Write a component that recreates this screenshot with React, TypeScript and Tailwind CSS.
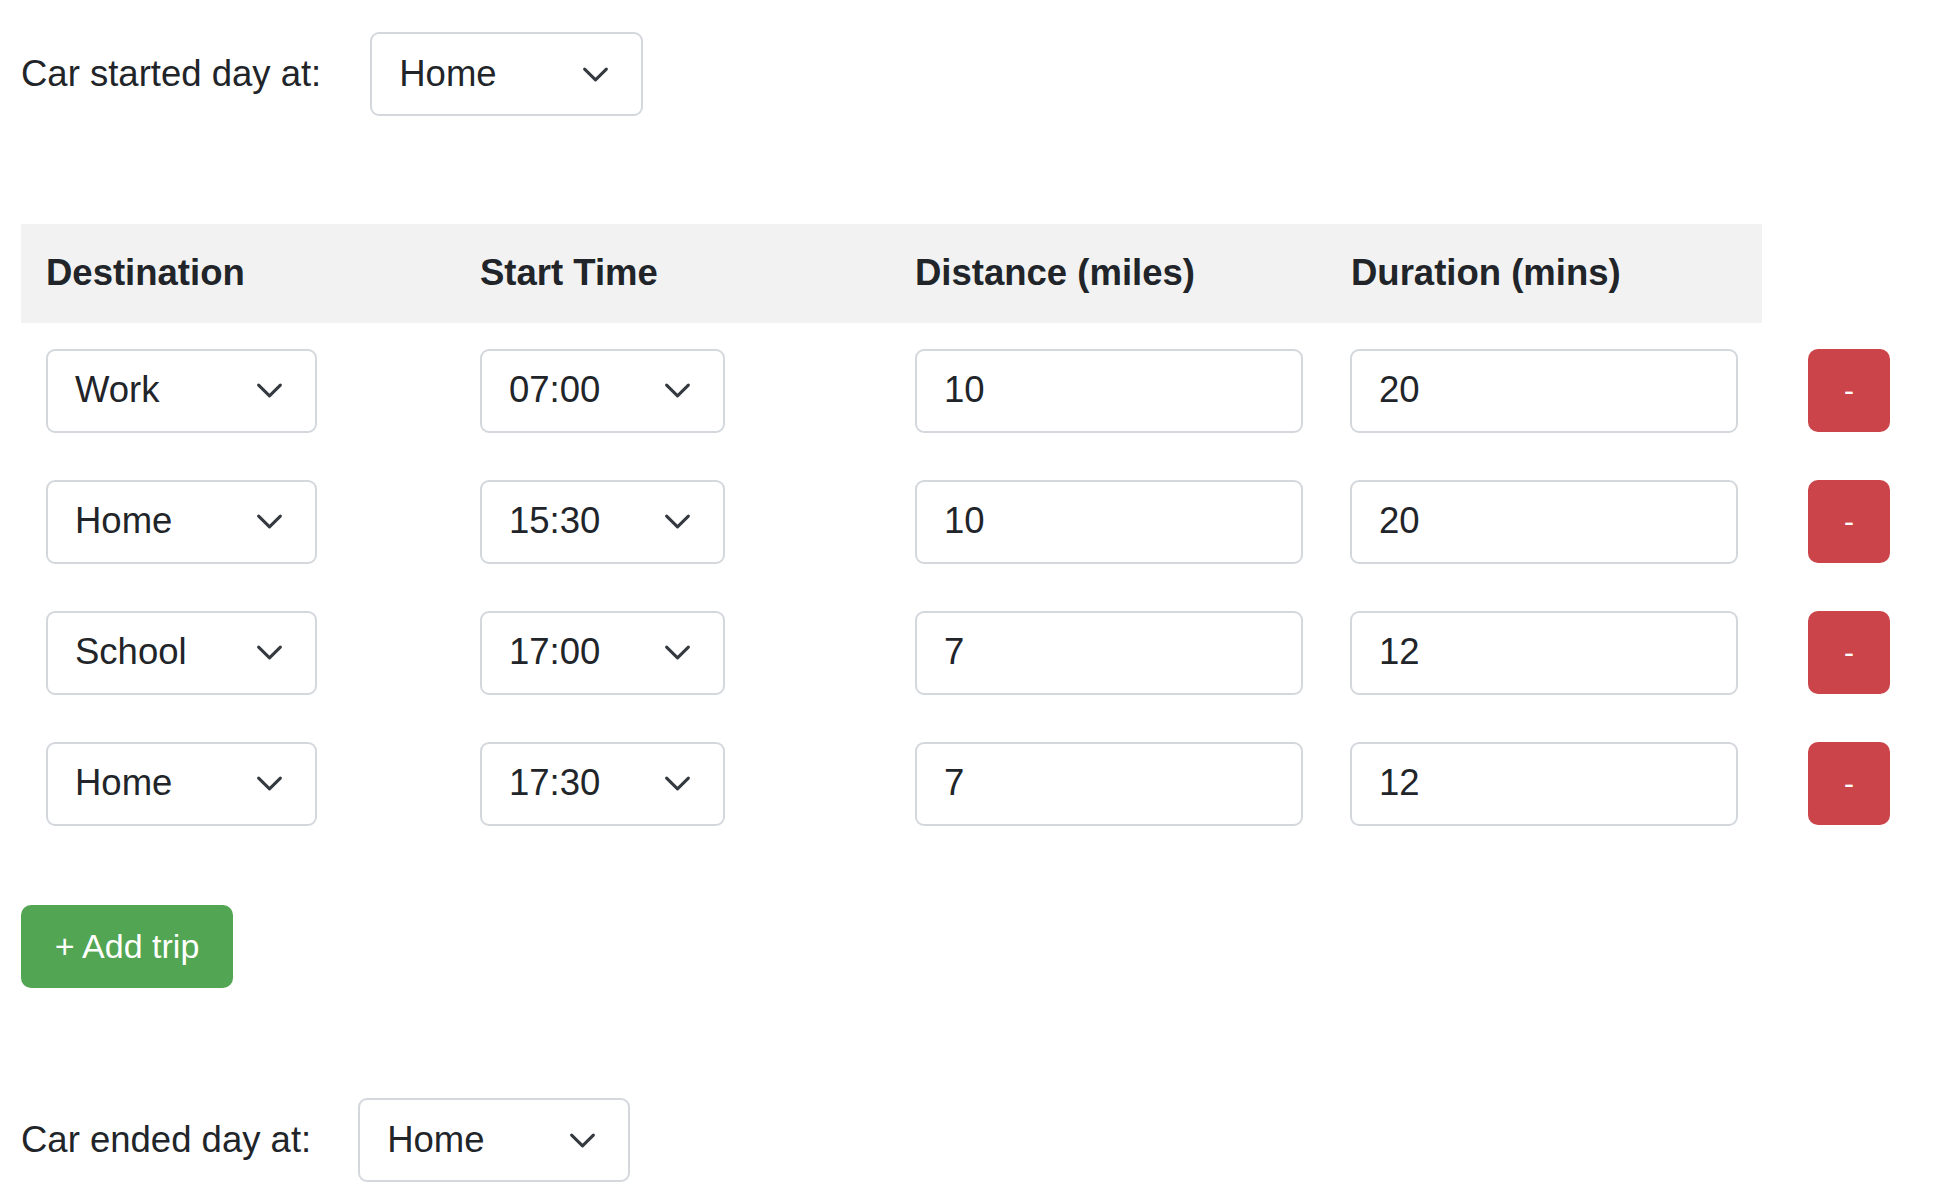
const trips = [
  { dest: "Work", time: "07:00", dist: "10", dur: "20" },
  { dest: "Home", time: "15:30", dist: "10", dur: "20" },
  { dest: "School", time: "17:00", dist: "7", dur: "12" },
  { dest: "Home", time: "17:30", dist: "7", dur: "12" },
];

function Chevron() {
  return (
    <svg width="29" height="29" viewBox="0 0 16 16" fill="none" className="shrink-0">
      <path d="m2 5 6 6 6-6" stroke="#343a40" strokeWidth="1.7" strokeLinecap="round" strokeLinejoin="round" />
    </svg>
  );
}

function Select({ value, width }: { value: string; width: string }) {
  return (
    <div className={`${width} h-[84px] flex items-center justify-between pl-[27px] pr-[31px] border-2 border-[#d4d8dd] rounded-[9px] bg-white`}>
      <span>{value}</span>
      <Chevron />
    </div>
  );
}

function Field({ value }: { value: string }) {
  return (
    <div className="w-[388px] h-[84px] flex items-center pl-[27px] border-2 border-[#d4d8dd] rounded-[9px] bg-white">
      {value}
    </div>
  );
}

export default function App() {
  return (
    <div className="min-h-screen bg-white text-[#212529] font-['Liberation_Sans',Arial,sans-serif] text-[36.5px] pl-[21px] pt-[32px]">
      <div className="flex items-center gap-[49px]">
        <span>Car started day at:</span>
        <Select value="Home" width="w-[273px]" />
      </div>

      <div className="mt-[108px]">
        <div className="flex w-[1741px] h-[99px] items-center bg-[#f2f2f2] font-bold">
          <div className="w-[435px] pl-[25px]">Destination</div>
          <div className="w-[435px] pl-[24px]">Start Time</div>
          <div className="w-[435px] pl-[24px]">Distance (miles)</div>
          <div className="w-[436px] pl-[25px]">Duration (mins)</div>
        </div>

        <div className="pt-[2px]">
          {trips.map((t, i) => (
            <div key={i} className="flex items-center h-[131px]">
              <div className="w-[435px] pl-[25px]">
                <Select value={t.dest} width="w-[271px]" />
              </div>
              <div className="w-[435px] pl-[24px]">
                <Select value={t.time} width="w-[245px]" />
              </div>
              <div className="w-[435px] pl-[24px]">
                <Field value={t.dist} />
              </div>
              <div className="w-[436px] pl-[24px]">
                <Field value={t.dur} />
              </div>
              <button className="ml-[46px] w-[82px] h-[83px] rounded-[10px] bg-[#cb444a] text-white text-[30px] leading-none">
                -
              </button>
            </div>
          ))}
        </div>
      </div>

      <button className="mt-[56px] w-[212px] h-[83px] rounded-[10px] bg-[#52a552] text-white text-[34px] flex items-center justify-center">
        + Add trip
      </button>

      <div className="mt-[110px] flex items-center gap-[47px]">
        <span>Car ended day at:</span>
        <Select value="Home" width="w-[272px]" />
      </div>
    </div>
  );
}
